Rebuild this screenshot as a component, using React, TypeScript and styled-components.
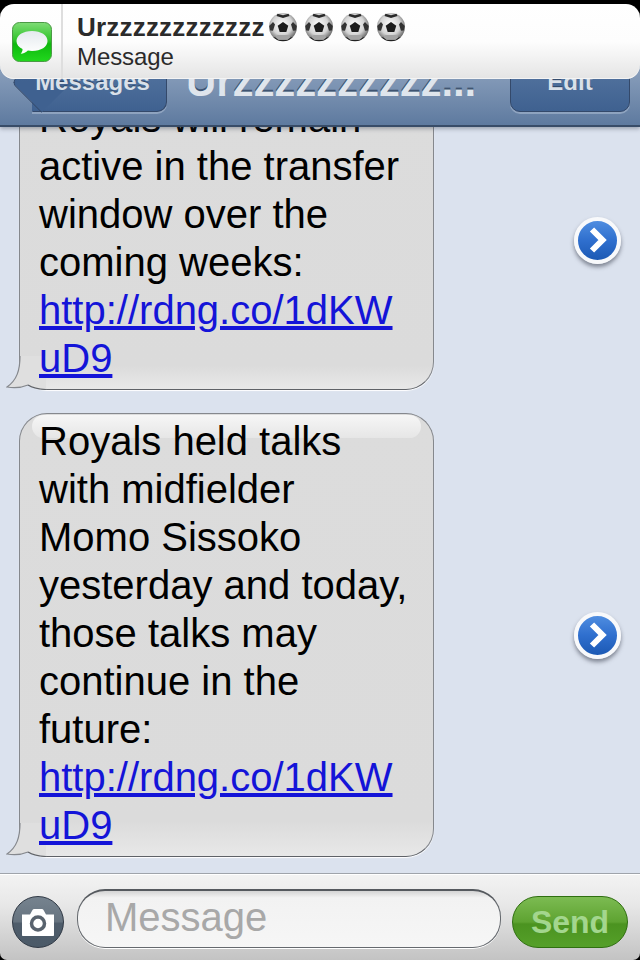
import * as React from 'react';
import styled, { createGlobalStyle } from 'styled-components';

const GlobalStyle = createGlobalStyle`
  html, body {
    margin: 0;
    padding: 0;
    background: #000;
    font-family: "Liberation Sans", Arial, sans-serif;
  }
`;

const Screen = styled.div`
  position: relative;
  width: 640px;
  height: 960px;
  display: flex;
  flex-direction: column;
  overflow: hidden;
  background: #000;
  border-radius: 0 0 7px 7px;
`;

const StatusStrip = styled.div`
  height: 40px;
  flex: none;
  background: #000;
`;

const Banner = styled.div`
  position: absolute;
  top: 4px;
  left: 0;
  right: 0;
  z-index: 5;
  height: 75px;
  display: flex;
  background: linear-gradient(#ffffff 0%, #fdfdfd 50%, #e4e4e4 100%);
  border-radius: 14px;
  box-shadow: inset 0 -1px 0 #f4f4f4;
`;

const BannerIconCell = styled.div`
  width: 63px;
  flex: none;
  display: flex;
  align-items: center;
  justify-content: center;
  padding: 0 0 0 3px;
  box-sizing: border-box;
  border-right: 2px solid #dedede;
`;

const BannerBody = styled.div`
  padding: 6px 0 0 14px;
  color: #2b2b2b;
`;

const BannerTitle = styled.div`
  display: flex;
  align-items: center;
  font-size: 26px;
  line-height: 34px;
  font-weight: bold;
  letter-spacing: 0.2px;
`;

const BannerBalls = styled.span`
  display: flex;
  gap: 6px;
  margin-left: 3px;
`;

const BannerText = styled.div`
  font-size: 24px;
  line-height: 28px;
  letter-spacing: -0.1px;
  margin-top: -1px;
`;

const NavBar = styled.div`
  position: relative;
  flex: none;
  height: 87px;
  box-sizing: border-box;
  padding: 12px 10px 0;
  display: flex;
  align-items: flex-start;
  background: linear-gradient(#9db0c8 0%, #7f96b5 50%, #5e7a9f 100%);
  border-bottom: 2px solid #384c68;
  box-shadow: 0 2px 4px rgba(40, 50, 70, 0.35);
  z-index: 2;
`;

const NavButton = styled.div<{ $wide?: boolean }>`
  position: relative;
  height: 60px;
  box-sizing: border-box;
  width: ${(p) => (p.$wide ? '120px' : '135px')};
  margin-left: ${(p) => (p.$wide ? '0' : '22px')};
  display: flex;
  align-items: center;
  justify-content: center;
  font-size: 24px;
  font-weight: bold;
  color: #d9e0e9;
  text-shadow: 0 -1px 0 #2e4463;
  background: linear-gradient(#5a7aa4 0%, #3f6190 100%);
  border: 1px solid #34496a;
  border-left-color: ${(p) => (p.$wide ? '#34496a' : 'transparent')};
  border-radius: ${(p) => (p.$wide ? '10px' : '0 10px 10px 0')};
  box-shadow: 0 2px 0 rgba(190, 205, 225, 0.45);
`;

const BackTip = styled.span`
  position: absolute;
  left: -13px;
  top: 8px;
  width: 42px;
  height: 42px;
  transform: rotate(45deg);
  background: linear-gradient(135deg, #4a6a97 0%, #3f6190 50%);
  border-left: 1px solid #34496a;
  border-bottom: 1px solid #34496a;
  border-radius: 0 0 0 6px;
`;

const BackLabel = styled.span`
  position: relative;
  margin-left: -14px;
`;

const NavTitle = styled.div`
  flex: 1;
  padding-left: 19px;
  font-size: 42px;
  line-height: 60px;
  font-weight: bold;
  letter-spacing: -0.1px;
  color: #dfe5ec;
  text-shadow: 0 -2px 0 #3f5471;
  white-space: nowrap;
`;

const Thread = styled.div`
  flex: 1;
  min-height: 0;
  overflow: hidden;
  display: flex;
  flex-direction: column;
  justify-content: flex-end;
  gap: 23px;
  padding: 0 19px 16px;
  background: #dbe2ee;
`;

const MessageRow = styled.div`
  flex: none;
  display: flex;
  align-items: center;
  justify-content: space-between;
`;

const Bubble = styled.div`
  position: relative;
  width: 415px;
  box-sizing: border-box;
  padding: 3px 20px 7px 19px;
  font-size: 40px;
  line-height: 48px;
  color: #000;
  overflow-wrap: anywhere;
  background: linear-gradient(#dcdcdc 0%, #dbdbdb 92%, #e8e8e8 100%);
  border: 1px solid #85888d;
  border-bottom-color: #5f6267;
  border-radius: 28px;
  box-shadow: 0 1px 1px #ffffff;
`;

const Gloss = styled.span`
  position: absolute;
  top: 1px;
  left: 12px;
  right: 12px;
  height: 23px;
  border-radius: 12px;
  background: linear-gradient(#f6f6f6 0%, #e6e6e6 100%);
`;

const BubbleText = styled.div`
  position: relative;
`;

const Link = styled.a`
  color: #1414d8;
  text-decoration: underline;
`;

const Tail = styled.svg`
  position: absolute;
  left: -14px;
  bottom: -1px;
  width: 40px;
  height: 34px;
`;

const Disclosure = styled.div`
  width: 47px;
  height: 47px;
  flex: none;
  box-sizing: border-box;
  border-radius: 50%;
  border: 4px solid #f8f9fb;
  display: flex;
  align-items: center;
  justify-content: center;
  background: linear-gradient(#4f8de0 0%, #2f6fce 50%, #1c59b4 100%);
  box-shadow: 0 3px 4px rgba(50, 55, 70, 0.55);
`;

const InputBar = styled.div`
  flex: none;
  height: 87px;
  box-sizing: border-box;
  padding: 15px 12px 0;
  display: flex;
  align-items: flex-start;
  background: linear-gradient(#f3f3f3 0%, #e8e8e8 35%, #c3c3c3 100%);
  border-top: 1px solid #9fa4ab;
  box-shadow: inset 0 1px 0 #ffffff;
`;

const CameraButton = styled.div`
  width: 52px;
  height: 52px;
  flex: none;
  margin-top: 7px;
  box-sizing: border-box;
  border-radius: 50%;
  border: 1px solid #2f3844;
  display: flex;
  align-items: center;
  justify-content: center;
  background: linear-gradient(#76838f 0%, #66737f 50%, #4f5d6b 52%, #4b5a68 100%);
`;

const MessageInput = styled.div`
  width: 425px;
  height: 59px;
  margin-left: 13px;
  box-sizing: border-box;
  padding-left: 27px;
  border-radius: 28px;
  border: 1px solid #65696e;
  border-top: 2px solid #55595e;
  background: linear-gradient(#d4d4d4 0%, #f2f2f2 12%, #f6f6f6 100%);
  box-shadow: 0 1px 0 #ffffff;
  font-size: 40px;
  line-height: 52px;
  color: #a8a8a8;
`;

const SendButton = styled.div`
  width: 116px;
  height: 52px;
  flex: none;
  margin: 7px 0 0 11px;
  box-sizing: border-box;
  border-radius: 26px;
  border: 1px solid #2f6f10;
  display: flex;
  align-items: center;
  justify-content: center;
  background: linear-gradient(#7cbb52 0%, #5ea331 50%, #4b9320 54%, #55a029 100%);
  font-size: 32px;
  font-weight: bold;
  color: #a3d68e;
`;

const Ball = () => {
  const id = React.useId();
  return (
    <svg width="30" height="30" viewBox="0 0 30 30">
      <defs>
        <radialGradient id={id} cx="0.47" cy="0.42" r="0.6">
          <stop offset="0" stopColor="#ffffff" />
          <stop offset="0.6" stopColor="#d4d4d4" />
          <stop offset="1" stopColor="#5c5c5c" />
        </radialGradient>
      </defs>
      <circle cx="15" cy="15" r="14" fill={`url(#${id})`} />
      <path d="M15 10l5.300 3.800-2 6.200h-6.600l-2-6.200z" fill="#1c1c1c" />
      <path d="M9.500 1.800l5.500 1.400 5.500-1.400 1 2.200-6.500 2-6.500-2z" fill="#2a2a2a" />
      <path d="M1.200 14l3.800-4 2 2.400-2 6.300-2.800-.2z" fill="#333" />
      <path d="M28.800 14l-3.800-4-2 2.400 2 6.300 2.800-.2z" fill="#333" />
      <path d="M9.500 23h11l2 2.600-3 2.200h-9l-3-2.200z" fill="#a4a4a4" />
      <path d="M5 25a14 14 0 0 0 20 0l-2.500.6-3 2.500h-9l-3-2.500z" fill="#222" />
    </svg>
  );
};

const MessagesIcon = () => (
  <svg width="40" height="40" viewBox="0 0 40 40">
    <defs>
      <linearGradient id="msg-green" x1="0" y1="0" x2="0" y2="1">
        <stop offset="0" stopColor="#7fdc76" />
        <stop offset="0.45" stopColor="#2fc42a" />
        <stop offset="0.55" stopColor="#0eb80e" />
        <stop offset="1" stopColor="#22d81e" />
      </linearGradient>
      <linearGradient id="msg-white" x1="0" y1="0" x2="0" y2="1">
        <stop offset="0" stopColor="#e4eaee" />
        <stop offset="1" stopColor="#ffffff" />
      </linearGradient>
    </defs>
    <rect x="0.5" y="0.5" width="39" height="39" rx="7" fill="url(#msg-green)" stroke="#4b9a45" />
    <path
      d="M20 9c-9 0-15.500 4.200-15.500 10 0 3.500 2.300 6.300 6 8 .3 1.700-.7 3.600-1.800 4.800 2.800-.2 5.400-1.500 7.200-3.300 1.300.3 2.700.5 4.100.5 9 0 15.500-4.300 15.500-10S29 9 20 9z"
      fill="url(#msg-white)"
    />
  </svg>
);

const Chevron = () => (
  <svg width="24" height="28" viewBox="0 0 24 28">
    <path d="M6 3.500L16.500 14 6 24.500" fill="none" stroke="#fff" strokeWidth="6" />
  </svg>
);

const CameraIcon = () => (
  <svg width="34" height="29" viewBox="0 0 34 29">
    <path
      d="M1 6.500h8l2.500-4.500c.3-.6 1-1 1.700-1h7.600c.7 0 1.400.4 1.700 1L25 6.500h8V27c0 .6-.4 1-1 1H2c-.6 0-1-.4-1-1z"
      fill="#fff"
    />
    <circle cx="17" cy="15.500" r="6.500" fill="none" stroke="#59636e" strokeWidth="3.500" />
  </svg>
);

const BubbleTail = () => (
  <Tail viewBox="0 0 40 34">
    <path d="M14 0c0 14-3 24-13 31 8 1.500 15 .5 21-2 4 2.500 8 4 18 4.500V0z" fill="#dfdfdf" />
    <path d="M14 0c0 14-3 24-13 31 8 1.500 15 .5 21-2" fill="none" stroke="#85888d" strokeWidth="1.200" />
    <path d="M22 29c4 2.500 8 4 18 4.500" fill="none" stroke="#5f6267" strokeWidth="1.200" />
  </Tail>
);

const threads = [
  {
    id: 'transfer',
    gloss: false,
    text: 'Royals will remain active in the transfer window over the coming weeks: ',
  },
  {
    id: 'sissoko',
    gloss: true,
    text: 'Royals held talks with midfielder Momo Sissoko yesterday and today, those talks may continue in the future: ',
  },
];

export default function App() {
  return (
    <Screen>
      <GlobalStyle />
      <StatusStrip />
      <Banner>
        <BannerIconCell>
          <MessagesIcon />
        </BannerIconCell>
        <BannerBody>
          <BannerTitle>
            Urzzzzzzzzzzzz
            <BannerBalls>
              <Ball />
              <Ball />
              <Ball />
              <Ball />
            </BannerBalls>
          </BannerTitle>
          <BannerText>Message</BannerText>
        </BannerBody>
      </Banner>
      <NavBar>
        <NavButton>
          <BackTip />
          <BackLabel>Messages</BackLabel>
        </NavButton>
        <NavTitle>Urzzzzzzzzzz...</NavTitle>
        <NavButton $wide>Edit</NavButton>
      </NavBar>
      <Thread>
        {threads.map((m) => (
          <MessageRow key={m.id}>
            <Bubble>
              {m.gloss && <Gloss />}
              <BubbleTail />
              <BubbleText>
                {m.text}
                <Link href="#">http://rdng.co/1dKWuD9</Link>
              </BubbleText>
            </Bubble>
            <Disclosure>
              <Chevron />
            </Disclosure>
          </MessageRow>
        ))}
      </Thread>
      <InputBar>
        <CameraButton>
          <CameraIcon />
        </CameraButton>
        <MessageInput>Message</MessageInput>
        <SendButton>Send</SendButton>
      </InputBar>
    </Screen>
  );
}
